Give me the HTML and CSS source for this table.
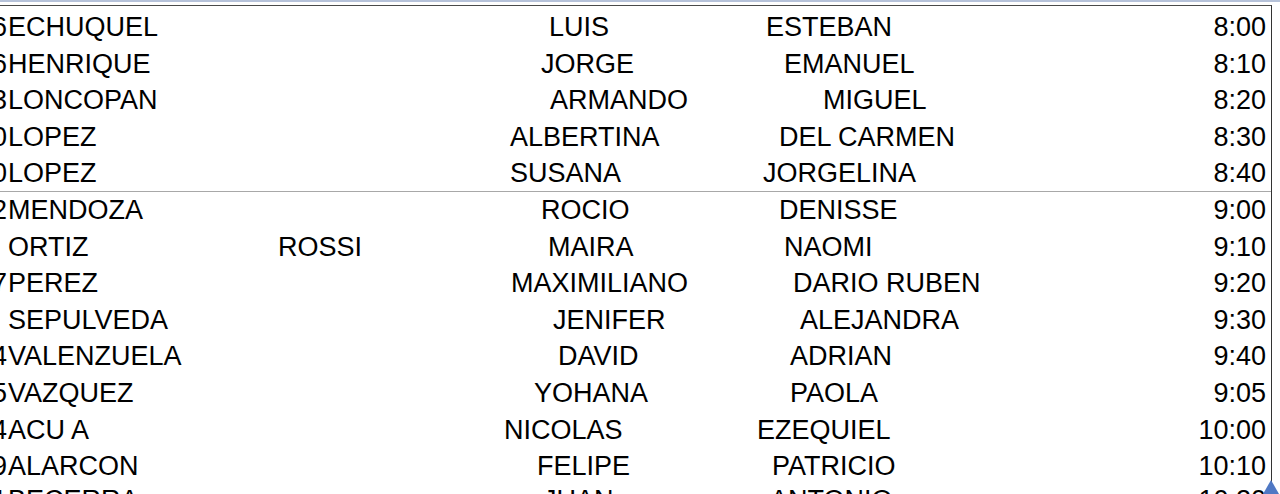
FILE: index.html
```html
<!DOCTYPE html>
<html lang="es">
<head>
<meta charset="utf-8">
<title>Listado</title>
<link rel="stylesheet" href="styles.css">
</head>
<body>
<div class="band"></div>
<div class="sheet">
  <div class="row"><span class="num">6</span><span class="s1">ECHUQUEL</span><span class="s2"></span><span class="f1" style="--x:49px">LUIS</span><span class="f2" style="--x:16px">ESTEBAN</span><span class="t">8:00</span></div>
  <div class="row"><span class="num">6</span><span class="s1">HENRIQUE</span><span class="s2"></span><span class="f1" style="--x:41px">JORGE</span><span class="f2" style="--x:34px">EMANUEL</span><span class="t">8:10</span></div>
  <div class="row"><span class="num">3</span><span class="s1">LONCOPAN</span><span class="s2"></span><span class="f1" style="--x:50px">ARMANDO</span><span class="f2" style="--x:73px">MIGUEL</span><span class="t">8:20</span></div>
  <div class="row"><span class="num">0</span><span class="s1">LOPEZ</span><span class="s2"></span><span class="f1" style="--x:10px">ALBERTINA</span><span class="f2" style="--x:29px">DEL CARMEN</span><span class="t">8:30</span></div>
  <div class="row row-split"><span class="num">0</span><span class="s1">LOPEZ</span><span class="s2"></span><span class="f1" style="--x:10px">SUSANA</span><span class="f2" style="--x:13px">JORGELINA</span><span class="t">8:40</span></div>
  <div class="row"><span class="num">2</span><span class="s1">MENDOZA</span><span class="s2"></span><span class="f1" style="--x:41px">ROCIO</span><span class="f2" style="--x:29px">DENISSE</span><span class="t">9:00</span></div>
  <div class="row"><span class="num"></span><span class="s1">ORTIZ</span><span class="s2">ROSSI</span><span class="f1" style="--x:48px">MAIRA</span><span class="f2" style="--x:34px">NAOMI</span><span class="t">9:10</span></div>
  <div class="row"><span class="num">7</span><span class="s1">PEREZ</span><span class="s2"></span><span class="f1" style="--x:11px">MAXIMILIANO</span><span class="f2" style="--x:43px">DARIO RUBEN</span><span class="t">9:20</span></div>
  <div class="row"><span class="num"></span><span class="s1">SEPULVEDA</span><span class="s2"></span><span class="f1" style="--x:53px">JENIFER</span><span class="f2" style="--x:50px">ALEJANDRA</span><span class="t">9:30</span></div>
  <div class="row"><span class="num">4</span><span class="s1">VALENZUELA</span><span class="s2"></span><span class="f1" style="--x:58px">DAVID</span><span class="f2" style="--x:40px">ADRIAN</span><span class="t">9:40</span></div>
  <div class="row"><span class="num">5</span><span class="s1">VAZQUEZ</span><span class="s2"></span><span class="f1" style="--x:34px">YOHANA</span><span class="f2" style="--x:40px">PAOLA</span><span class="t">9:05</span></div>
  <div class="row"><span class="num">4</span><span class="s1">ACU A</span><span class="s2"></span><span class="f1" style="--x:4px">NICOLAS</span><span class="f2" style="--x:7px">EZEQUIEL</span><span class="t">10:00</span></div>
  <div class="row"><span class="num">9</span><span class="s1">ALARCON</span><span class="s2"></span><span class="f1" style="--x:37px">FELIPE</span><span class="f2" style="--x:22px">PATRICIO</span><span class="t">10:10</span></div>
  <div class="row row-last"><span class="num">1</span><span class="s1">BECERRA</span><span class="s2"></span><span class="f1" style="--x:43px">JUAN</span><span class="f2" style="--x:20px">ANTONIO</span><span class="t">10:20</span></div>
</div>
<div class="corner-arrow"></div>
</body>
</html>
```

FILE: styles.css
```css
html, body {
  margin: 0;
  padding: 0;
  background: #ffffff;
  overflow: hidden;
  height: 494px;
}
body {
  position: relative;
  font-family: "Liberation Sans", Arial, sans-serif;
  font-size: 27px;
  color: #000;
}
.band {
  height: 2px;
  background: #b6c2d9;
}
.sheet {
  margin-top: 3px;
  width: 1271px;
  border-top: 1px solid #4a4a4a;
  border-right: 1px solid #333;
  padding-top: 3px;
  height: 600px;
}
.row {
  display: grid;
  grid-template-columns: 7px 271px 222px 250px 1fr auto;
  height: 36.6px;
  line-height: 36.6px;
  box-sizing: border-box;
  white-space: nowrap;
}
.row-split {
  border-bottom: 1px solid #a8a8a8;
}
.row-last {
  margin-top: -3px;
}
.num {
  text-align: right;
  direction: rtl;
  overflow: visible;
}
.s1 {
  padding-left: 1px;
}
.f1, .f2 {
  padding-left: var(--x, 0px);
}
.t {
  text-align: right;
  padding-right: 5px;
}
.corner-arrow {
  position: absolute;
  right: 1px;
  bottom: 0;
  width: 0;
  height: 0;
  border-left: 8px solid transparent;
  border-right: 8px solid transparent;
  border-bottom: 14px solid #4f78c4;
}
```
